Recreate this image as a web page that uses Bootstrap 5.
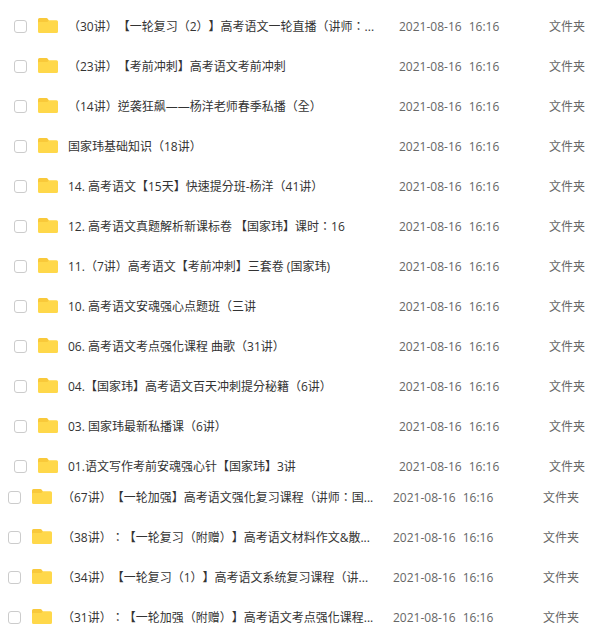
<!DOCTYPE html>
<html lang="zh-CN">
<head>
<meta charset="utf-8">
<meta name="viewport" content="width=device-width, initial-scale=1">
<title>文件列表</title>
<link href="https://cdn.jsdelivr.net/npm/bootstrap@5.3.0/dist/css/bootstrap.min.css" rel="stylesheet">
<style>
  body { font-family: "Open Sans", "Noto Sans CJK TC", "Noto Sans CJK SC", sans-serif; font-size: 12px; line-height: 20px; color: #333; background: #fff; font-feature-settings: "locl" 0; text-spacing-trim: space-all; }
  .file-area { padding-top: 17px; }
  .file-group { padding: 0 20px 0 14px; }
  .file-group + .file-group { padding: 0 26px 0 8px; margin-top: 11px; }
  .file-list { width: 100%; table-layout: fixed; }
  .file-list td { padding: 0 0 20px; vertical-align: top; white-space: nowrap; }
  .file-list tr:last-child td { padding-bottom: 0; }
  .col-pick { width: 24px; }
  .col-icon { width: 30px; }
  .col-time { width: 150px; }
  .col-kind { width: 36px; }
  .file-list .form-check-input { width: 13px; height: 13px; margin: 3px 0 0; border: 1px solid #ccc; border-radius: 3px; }
  .folder { width: 20px; height: 16px; margin-top: 1px; }
  .meta { color: #666; }
  .clock { margin-left: 4px; }
</style>
<script src="https://cdn.jsdelivr.net/npm/bootstrap@5.3.0/dist/js/bootstrap.bundle.min.js"></script>
</head>
<body>
<svg class="d-none" xmlns="http://www.w3.org/2000/svg">
  <symbol id="folder" viewBox="0 0 20 16">
    <path fill="#f9c93a" d="M0 1.500Q0 0 1.500 0H8.500q.8 0 1.200.7L11 2.500V6H0z"/>
    <path fill="#ffd84a" d="M0 5Q0 4 1 4H8.500q.8 0 1.300-.6l.7-.8q.4-.4 1-.4h7Q20 2.200 20 3.700v9.800q0 1.500-1.500 1.500H1.500Q0 15 0 13.500z"/>
  </symbol>
</svg>
<main class="file-area">
  <div class="file-group">
    <table class="file-list">
      <colgroup><col class="col-pick"><col class="col-icon"><col><col class="col-time"><col class="col-kind"></colgroup>
      <tbody>
        <tr><td><input class="form-check-input d-block" type="checkbox" id="f1"></td><td><svg class="folder d-block" aria-hidden="true"><use href="#folder"/></svg></td><td><label class="d-block" for="f1">（30讲）【一轮复习（2）】高考语文一轮直播（讲师：...</label></td><td class="meta">2021-08-16 <span class="clock">16:16</span></td><td class="meta">文件夹</td></tr>
        <tr><td><input class="form-check-input d-block" type="checkbox" id="f2"></td><td><svg class="folder d-block" aria-hidden="true"><use href="#folder"/></svg></td><td><label class="d-block" for="f2">（23讲）【考前冲刺】高考语文考前冲刺</label></td><td class="meta">2021-08-16 <span class="clock">16:16</span></td><td class="meta">文件夹</td></tr>
        <tr><td><input class="form-check-input d-block" type="checkbox" id="f3"></td><td><svg class="folder d-block" aria-hidden="true"><use href="#folder"/></svg></td><td><label class="d-block" for="f3">（14讲）逆袭狂飙——杨洋老师春季私播（全）</label></td><td class="meta">2021-08-16 <span class="clock">16:16</span></td><td class="meta">文件夹</td></tr>
        <tr><td><input class="form-check-input d-block" type="checkbox" id="f4"></td><td><svg class="folder d-block" aria-hidden="true"><use href="#folder"/></svg></td><td><label class="d-block" for="f4">国家玮基础知识（18讲）</label></td><td class="meta">2021-08-16 <span class="clock">16:16</span></td><td class="meta">文件夹</td></tr>
        <tr><td><input class="form-check-input d-block" type="checkbox" id="f5"></td><td><svg class="folder d-block" aria-hidden="true"><use href="#folder"/></svg></td><td><label class="d-block" for="f5">14. 高考语文【15天】快速提分班-杨洋（41讲）</label></td><td class="meta">2021-08-16 <span class="clock">16:16</span></td><td class="meta">文件夹</td></tr>
        <tr><td><input class="form-check-input d-block" type="checkbox" id="f6"></td><td><svg class="folder d-block" aria-hidden="true"><use href="#folder"/></svg></td><td><label class="d-block" for="f6">12. 高考语文真题解析新课标卷 【国家玮】课时：16</label></td><td class="meta">2021-08-16 <span class="clock">16:16</span></td><td class="meta">文件夹</td></tr>
        <tr><td><input class="form-check-input d-block" type="checkbox" id="f7"></td><td><svg class="folder d-block" aria-hidden="true"><use href="#folder"/></svg></td><td><label class="d-block" for="f7">11.（7讲）高考语文【考前冲刺】三套卷 (国家玮)</label></td><td class="meta">2021-08-16 <span class="clock">16:16</span></td><td class="meta">文件夹</td></tr>
        <tr><td><input class="form-check-input d-block" type="checkbox" id="f8"></td><td><svg class="folder d-block" aria-hidden="true"><use href="#folder"/></svg></td><td><label class="d-block" for="f8">10. 高考语文安魂强心点题班（三讲</label></td><td class="meta">2021-08-16 <span class="clock">16:16</span></td><td class="meta">文件夹</td></tr>
        <tr><td><input class="form-check-input d-block" type="checkbox" id="f9"></td><td><svg class="folder d-block" aria-hidden="true"><use href="#folder"/></svg></td><td><label class="d-block" for="f9">06. 高考语文考点强化课程 曲歌（31讲）</label></td><td class="meta">2021-08-16 <span class="clock">16:16</span></td><td class="meta">文件夹</td></tr>
        <tr><td><input class="form-check-input d-block" type="checkbox" id="f10"></td><td><svg class="folder d-block" aria-hidden="true"><use href="#folder"/></svg></td><td><label class="d-block" for="f10">04.【国家玮】高考语文百天冲刺提分秘籍（6讲）</label></td><td class="meta">2021-08-16 <span class="clock">16:16</span></td><td class="meta">文件夹</td></tr>
        <tr><td><input class="form-check-input d-block" type="checkbox" id="f11"></td><td><svg class="folder d-block" aria-hidden="true"><use href="#folder"/></svg></td><td><label class="d-block" for="f11">03. 国家玮最新私播课（6讲）</label></td><td class="meta">2021-08-16 <span class="clock">16:16</span></td><td class="meta">文件夹</td></tr>
        <tr><td><input class="form-check-input d-block" type="checkbox" id="f12"></td><td><svg class="folder d-block" aria-hidden="true"><use href="#folder"/></svg></td><td><label class="d-block" for="f12">01.语文写作考前安魂强心针【国家玮】3讲</label></td><td class="meta">2021-08-16 <span class="clock">16:16</span></td><td class="meta">文件夹</td></tr>
      </tbody>
    </table>
  </div>
  <div class="file-group">
    <table class="file-list">
      <colgroup><col class="col-pick"><col class="col-icon"><col><col class="col-time"><col class="col-kind"></colgroup>
      <tbody>
        <tr><td><input class="form-check-input d-block" type="checkbox" id="f13"></td><td><svg class="folder d-block" aria-hidden="true"><use href="#folder"/></svg></td><td><label class="d-block" for="f13">（67讲）【一轮加强】高考语文强化复习课程（讲师：国...</label></td><td class="meta">2021-08-16 <span class="clock">16:16</span></td><td class="meta">文件夹</td></tr>
        <tr><td><input class="form-check-input d-block" type="checkbox" id="f14"></td><td><svg class="folder d-block" aria-hidden="true"><use href="#folder"/></svg></td><td><label class="d-block" for="f14">（38讲）：【一轮复习（附赠）】高考语文材料作文&amp;散...</label></td><td class="meta">2021-08-16 <span class="clock">16:16</span></td><td class="meta">文件夹</td></tr>
        <tr><td><input class="form-check-input d-block" type="checkbox" id="f15"></td><td><svg class="folder d-block" aria-hidden="true"><use href="#folder"/></svg></td><td><label class="d-block" for="f15">（34讲）【一轮复习（1）】高考语文系统复习课程（讲...</label></td><td class="meta">2021-08-16 <span class="clock">16:16</span></td><td class="meta">文件夹</td></tr>
        <tr><td><input class="form-check-input d-block" type="checkbox" id="f16"></td><td><svg class="folder d-block" aria-hidden="true"><use href="#folder"/></svg></td><td><label class="d-block" for="f16">（31讲）：【一轮加强（附赠）】高考语文考点强化课程...</label></td><td class="meta">2021-08-16 <span class="clock">16:16</span></td><td class="meta">文件夹</td></tr>
      </tbody>
    </table>
  </div>
</main>
</body>
</html>
